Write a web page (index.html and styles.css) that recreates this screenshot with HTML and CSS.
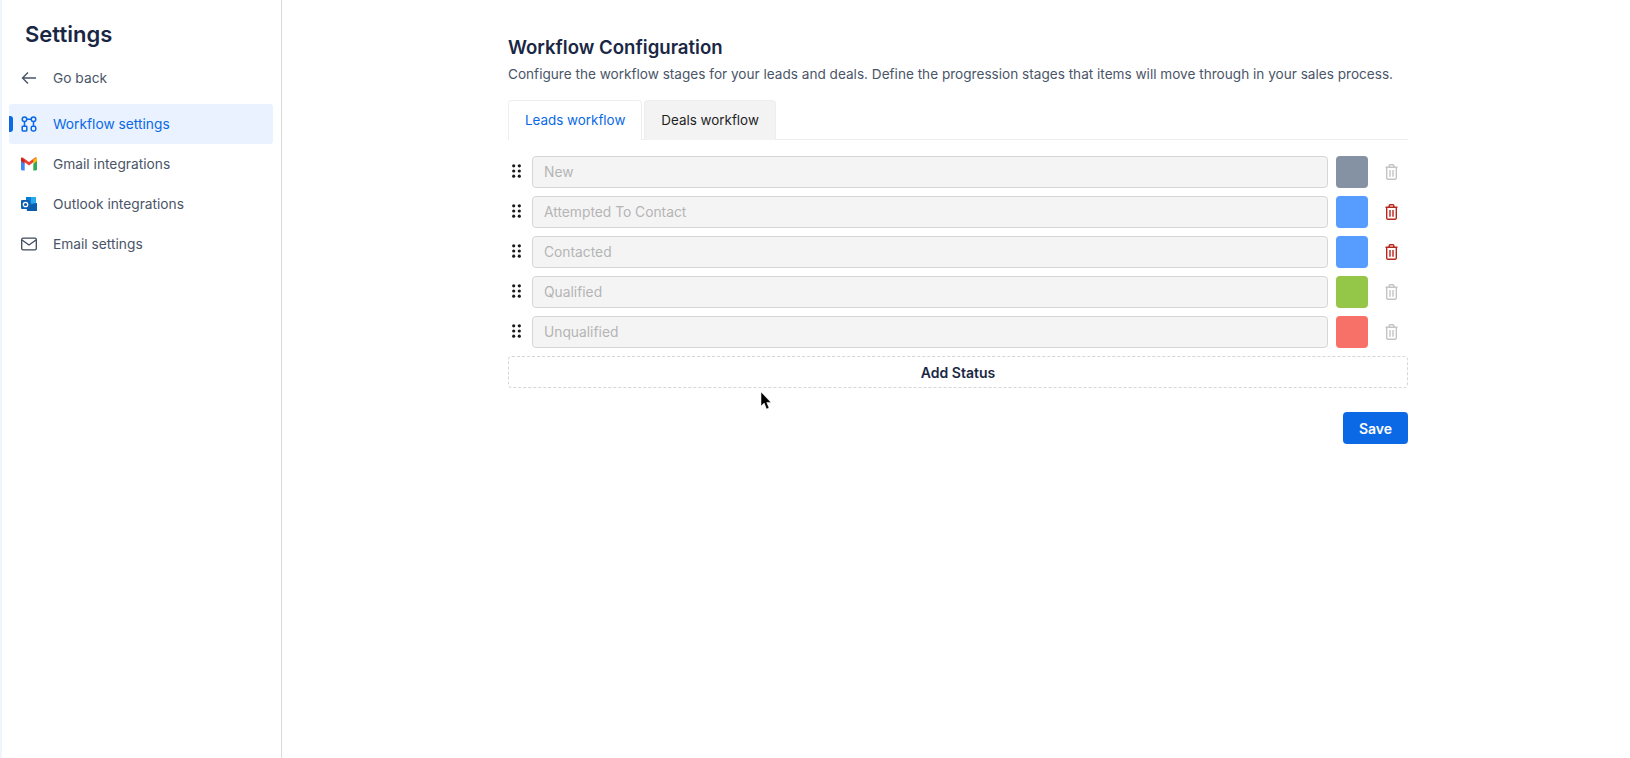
FILE: index.html
```html
<!DOCTYPE html>
<html lang="en">
<head>
<meta charset="utf-8">
<title>Settings</title>
<link rel="stylesheet" href="styles.css">
</head>
<body>
<svg class="defs" width="0" height="0">
  <symbol id="trash" viewBox="0 0 13 16">
    <path d="M.5 3.200h12M4.200 3V1.600a.8.8 0 0 1 .8-.8h3a.8.8 0 0 1 .8.8V3M1.700 3.200v10.800a1.200 1.200 0 0 0 1.200 1.200h7.200a1.200 1.200 0 0 0 1.200-1.200V3.200M5 6v6.800M8 6v6.800" fill="none" stroke="currentColor" stroke-width="1.400"/>
  </symbol>
  <symbol id="grip" viewBox="0 0 9 14">
    <g fill="currentColor"><circle cx="1.700" cy="1.800" r="1.600"/><circle cx="7.300" cy="1.800" r="1.600"/><circle cx="1.700" cy="7" r="1.600"/><circle cx="7.300" cy="7" r="1.600"/><circle cx="1.700" cy="12.200" r="1.600"/><circle cx="7.300" cy="12.200" r="1.600"/></g>
  </symbol>
</svg>
<div class="app">
  <aside class="sidebar">
    <h1 class="brand">Settings</h1>
    <a class="nav-item back">
      <svg class="icon" viewBox="0 0 16 16"><path d="M15 8H1.500M7 2.500 1.500 8 7 13.500" fill="none" stroke="#4a5568" stroke-width="1.400"/></svg>
      <span>Go back</span>
    </a>
    <nav class="nav">
      <a class="nav-item active">
        <svg class="icon" viewBox="0 0 16 16"><g fill="none" stroke="#0b69e6" stroke-width="1.500"><circle cx="3.500" cy="3.200" r="2.300"/><circle cx="12.500" cy="3.200" r="2.300"/><rect x="1.200" y="10.300" width="4.600" height="4.600" rx=".6"/><rect x="10.200" y="10.300" width="4.600" height="4.600" rx="1.600"/><path d="M3.500 5.500v4.800M12.500 5.500v4.800M5.800 3.200h4.400"/></g></svg>
        <span>Workflow settings</span>
      </a>
      <a class="nav-item">
        <svg class="icon" viewBox="0 0 16 13"><path d="M0 2.200V11.800C0 12.400.5 13 1.200 13H3.700V6.300Z" fill="#4285f4"/><path d="M16 2.200V11.800C16 12.400 15.500 13 14.800 13H12.300V6.300Z" fill="#34a853"/><path d="M0 1.900 8 8 16 1.900 16 1C15.800 0 14.500-.3 13.500.4L8 4.500 2.500.4C1.500-.3.200 0 0 1Z" fill="#ea4335"/><path d="M12.300 2.100 16 0V3.500L12.300 6.300Z" fill="#fbbc04"/><path d="M0 0 3.700 2.800V6.300L0 3.500Z" fill="#c5221f"/></svg>
        <span>Gmail integrations</span>
      </a>
      <a class="nav-item">
        <svg class="icon" viewBox="0 0 16 16"><rect x="5" y="1" width="10" height="6" fill="#0a7bd4"/><rect x="10" y="1" width="5" height="6" fill="#28a8ea"/><rect x="5" y="7" width="5" height="5" fill="#0f6cbd"/><rect x="10" y="7" width="6" height="5" fill="#1490df"/><path d="M5 10 16 7V15H6Z" fill="#0a5cad"/><rect x="0" y="4" width="9" height="9" rx="1" fill="#0f5fb0"/><circle cx="4.500" cy="8.500" r="2.200" fill="none" stroke="#fff" stroke-width="1.300"/></svg>
        <span>Outlook integrations</span>
      </a>
      <a class="nav-item">
        <svg class="icon" viewBox="0 0 16 13"><rect x=".7" y=".7" width="14.600" height="11.600" rx="1.400" fill="none" stroke="#3f4a5c" stroke-width="1.300"/><path d="M1 2.500 8 7.500 15 2.500" fill="none" stroke="#3f4a5c" stroke-width="1.300"/></svg>
        <span>Email settings</span>
      </a>
    </nav>
  </aside>
  <main class="main">
    <section class="panel">
      <h2 class="title">Workflow Configuration</h2>
      <p class="subtitle">Configure the workflow stages for your leads and deals. Define the progression stages that items will move through in your sales process.</p>
      <div class="tabs">
        <div class="tab tab-active">Leads workflow</div>
        <div class="tab">Deals workflow</div>
      </div>
      <div class="rows">
        <div class="row"><svg class="grip"><use href="#grip"/></svg><input class="field" disabled placeholder="New"><span class="swatch gray"></span><svg class="trash off"><use href="#trash"/></svg></div>
        <div class="row"><svg class="grip"><use href="#grip"/></svg><input class="field" disabled placeholder="Attempted To Contact"><span class="swatch blue"></span><svg class="trash on"><use href="#trash"/></svg></div>
        <div class="row"><svg class="grip"><use href="#grip"/></svg><input class="field" disabled placeholder="Contacted"><span class="swatch blue"></span><svg class="trash on"><use href="#trash"/></svg></div>
        <div class="row"><svg class="grip"><use href="#grip"/></svg><input class="field" disabled placeholder="Qualified"><span class="swatch green"></span><svg class="trash off"><use href="#trash"/></svg></div>
        <div class="row"><svg class="grip"><use href="#grip"/></svg><input class="field" disabled placeholder="Unqualified"><span class="swatch red"></span><svg class="trash off"><use href="#trash"/></svg></div>
      </div>
      <button class="add">Add Status</button>
      <div class="actions"><button class="save">Save</button></div>
      <svg class="cursor" viewBox="0 0 12 18"><path d="M1 0V14L4.200 11 6.500 17 9 16 6.700 10.400H11Z" fill="#000" stroke="#fff" stroke-width=".5"/></svg>
    </section>
  </main>
</div>
</body>
</html>
```
FILE: styles.css
```css
* { box-sizing: border-box; }
html, body { margin: 0; height: 100%; }
body { font-family: Inter, "Liberation Sans", sans-serif; background: #fff; color: #1a2744; overflow: hidden; }
.defs { position: absolute; }
.app { display: flex; height: 758px; }
.sidebar { width: 282px; flex: none; border-left: 2px solid #eef5fe; border-right: 1px solid #d9dbdf; padding: 20px 8px 0 7px; }
.brand { margin: 0 0 10px 16px; font-size: 22px; line-height: 28px; font-weight: 600; color: #1a2744; }
.nav-item { position: relative; display: flex; align-items: center; gap: 16px; height: 40px; padding-left: 12px; font-size: 13.75px; color: #4a5568; border-radius: 3px; }
.nav-item .icon { width: 16px; height: 16px; flex: none; }
.back { margin-bottom: 6px; }
.active { background: #e9f2fe; color: #0b69e6; }
.active::before { content: ""; position: absolute; left: 0; top: 12px; width: 4px; height: 16px; background: #0b69e6; border-radius: 0 3px 3px 0; }
.main { flex: 1; padding: 35px 0 0 226px; }
.panel { position: relative; width: 900px; }
.title { margin: 0; font-size: 18.6px; line-height: 24px; font-weight: 600; color: #1a2744; }
.subtitle { margin: 5px 0 0; font-size: 13.6px; line-height: 20px; color: #4a5568; white-space: nowrap; }
.tabs { display: flex; gap: 2px; margin-top: 16px; height: 40px; border-bottom: 1px solid #eceef0; }
.tab { height: 40px; padding: 0 16px 2px; display: flex; align-items: center; font-size: 13.4px; color: #1f1f1f; background: #f3f3f3; border: 1px solid #eeeeee; border-bottom: 0; border-radius: 4px 4px 0 0; }
.tab-active { background: #fff; color: #0b69e6; border-color: #eceef0; }
.rows { display: flex; flex-direction: column; gap: 8px; margin-top: 16px; }
.row { display: flex; align-items: center; height: 32px; }
.grip { width: 9px; height: 14px; margin: -2px 11px 0 4px; color: #1a1a1a; }
.field { width: 796px; height: 32px; padding: 0 11px 1px; font: 13.8px Inter, "Liberation Sans", sans-serif; background: #f4f4f4; border: 1px solid #d6d6d6; border-radius: 4px; }
.field::placeholder { color: #b4b4b4; opacity: 1; }
.swatch { width: 32px; height: 32px; margin-left: 8px; border-radius: 4px; }
.gray { background: #8592a3; }
.blue { background: #579dff; }
.green { background: #94c748; }
.red { background: #f87168; }
.trash { width: 13px; height: 16px; margin-left: 17px; margin-top: -1px; }
.off { color: #c4c4c4; }
.on { color: #b5261c; }
.add { display: block; width: 100%; height: 32px; margin-top: 8px; background: #fff; border: 1px dashed #d6d6d6; border-radius: 4px; font: 600 14px Inter, "Liberation Sans", sans-serif; color: #1a2744; }
.actions { display: flex; justify-content: flex-end; margin-top: 24px; }
.save { width: 65px; height: 32px; background: #0b69e6; color: #fff; border: 0; border-radius: 4px; font: 600 14px Inter, "Liberation Sans", sans-serif; }
.cursor { position: absolute; left: 252px; top: 357px; width: 12px; height: 18px; }
```
